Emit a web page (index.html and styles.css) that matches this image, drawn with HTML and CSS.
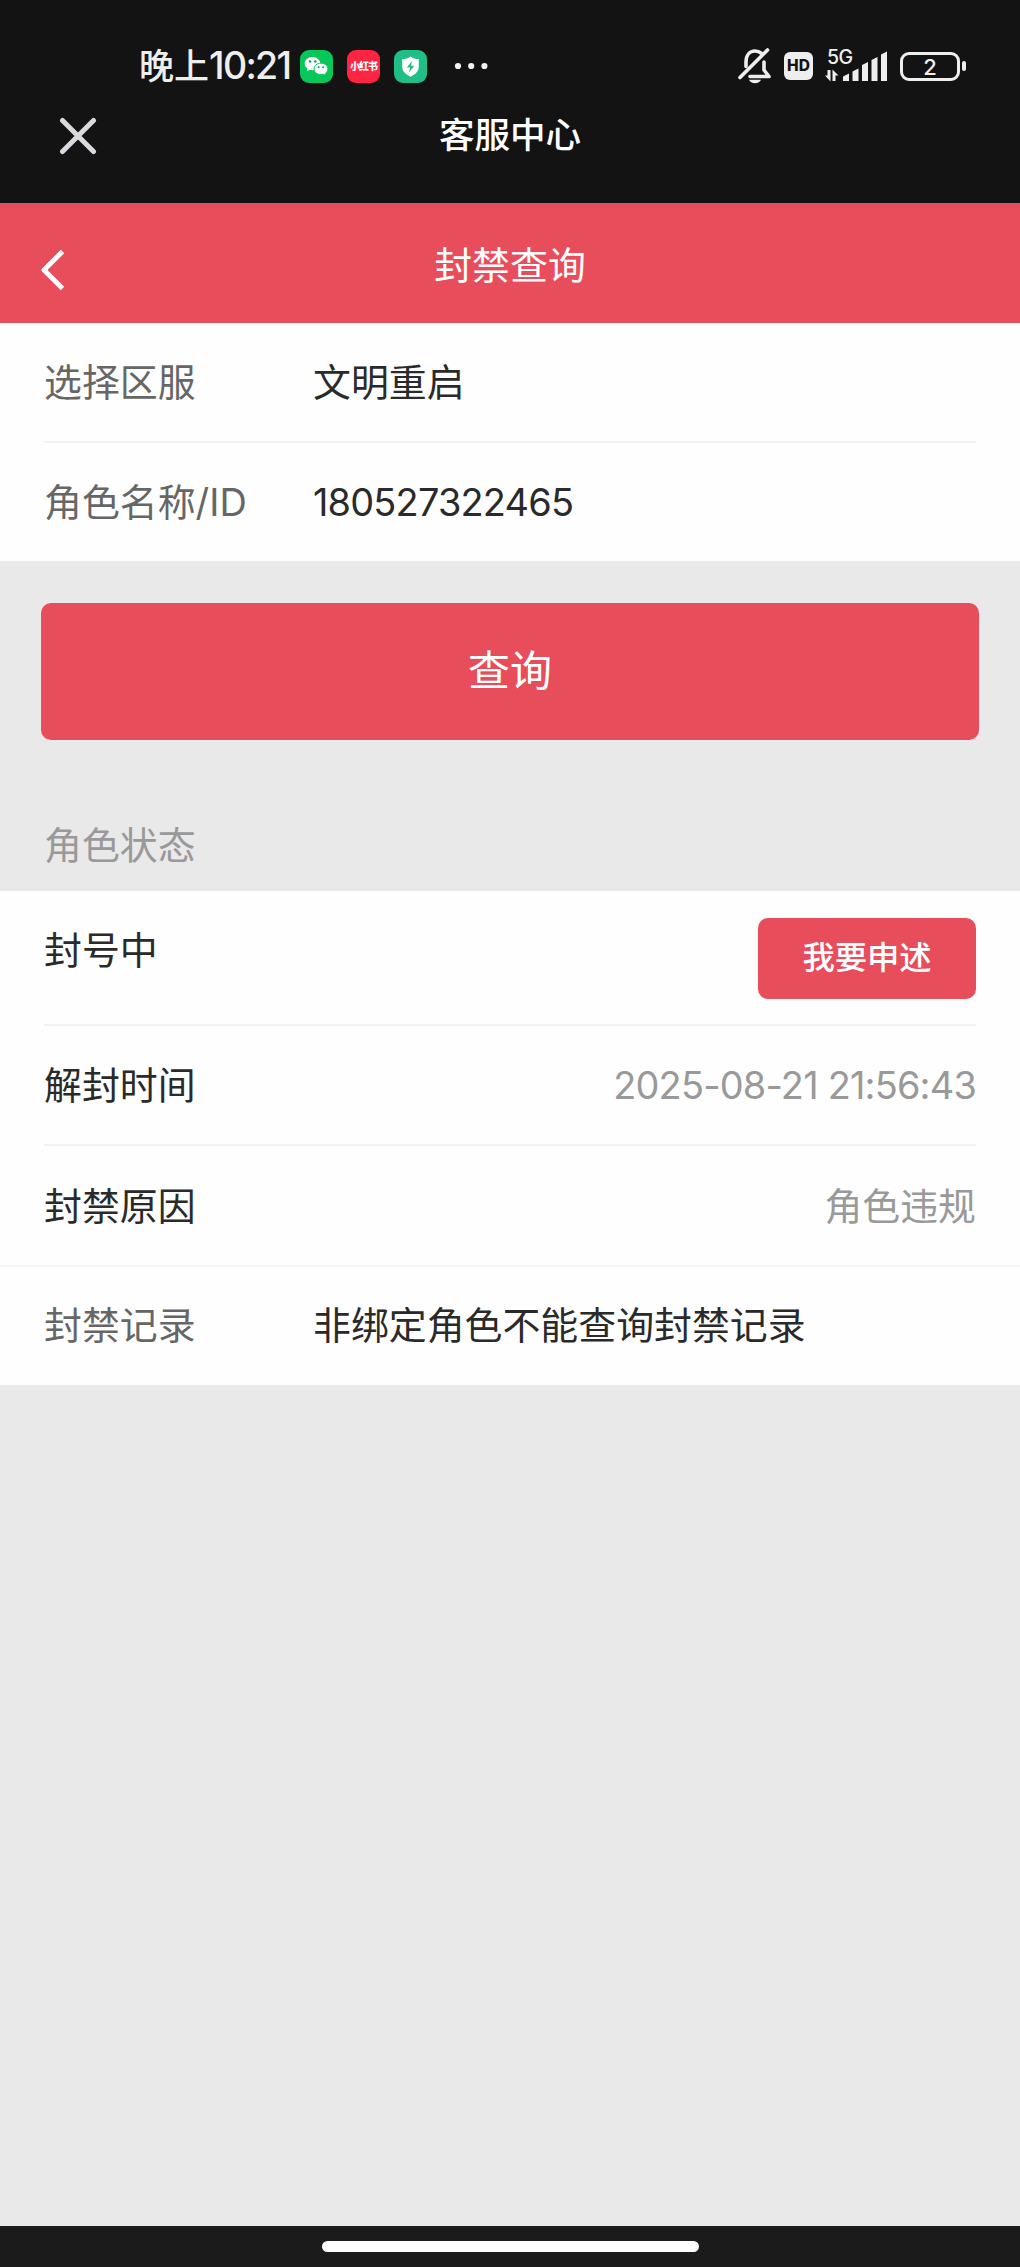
FILE: index.html
```
<!DOCTYPE html>
<html lang="zh-CN">
  <head>
    <meta charset="UTF-8" />
    <meta name="viewport" content="width=device-width, initial-scale=1" />
    <title>封禁查询</title>
    <link rel="stylesheet" href="styles.css">
  </head>
  <body>
    <div class="status-bar">
      <span class="time">晚上<span class="clock">10:21</span></span>
      <div class="app-icons">
        <svg width="33" height="33" viewBox="0 0 33 33">
          <rect width="33" height="33" rx="9" fill="#07c75b" />
          <path d="M12.500 7C8 7 4.700 10 4.700 13.600c0 2.100 1.100 3.900 2.800 5.100l-.6 2.600 2.900-1.500c.9.300 1.800.4 2.700.4 4.300 0 7.800-3 7.800-6.600S16.800 7 12.500 7z" fill="#fff" />
          <path d="M21 13.200c-4 0-7 2.500-7 5.700s3 5.700 7 5.700c.8 0 1.600-.1 2.300-.3l2.600 1.300-.6-2.200c1.600-1 2.600-2.700 2.600-4.500 0-3.200-3-5.700-6.900-5.700z" fill="#fff" stroke="#07c75b" stroke-width="1" />
          <g fill="#07a04b">
            <circle cx="10" cy="11.500" r="1.200" />
            <circle cx="15.300" cy="11.500" r="1.200" />
            <circle cx="18.700" cy="17.300" r="1" />
            <circle cx="23.200" cy="17.300" r="1" />
          </g>
        </svg>
        <span class="red-app">小红书</span>
        <svg width="33" height="33" viewBox="0 0 33 33">
          <rect width="33" height="33" rx="9" fill="#1fbf86" />
          <path d="M16.500 6.500c2.500 1.800 5 2.500 8.300 2.700v7.300c0 4.700-3.300 7.900-8.300 10.200-5-2.300-8.300-5.500-8.300-10.200V9.200c3.300-.2 5.800-.9 8.300-2.700z" fill="#fff" />
          <path d="M18 11l-5.200 6.400h3.300L15 22.500l5.300-6.700H17z" fill="#1fbf86" />
        </svg>
      </div>
      <svg class="more" width="34" height="8" viewBox="0 0 34 8" fill="#f2f2f2">
        <circle cx="4" cy="4" r="3.100" />
        <circle cx="17.200" cy="4" r="3.100" />
        <circle cx="30.400" cy="4" r="3.100" />
      </svg>
      <div class="system-icons">
        <svg class="bell" width="34" height="36" viewBox="0 0 34 36" fill="none" stroke="#eee" stroke-width="3.600" stroke-linecap="round" stroke-linejoin="round">
          <path d="M8 18.500V14C8 7.500 11.500 3 17 3c2.500 0 4.600.8 6.200 2.200" />
          <path d="M26 14v8l5 6.500H12" />
          <path d="M29.500 2L2 29.500" />
          <path d="M11 31.800h12c-1 2.300-3 3.500-6 3.500s-5-1.200-6-3.500z" fill="#eee" stroke="none" />
        </svg>
        <span class="hd">HD</span>
        <div class="signal">
          <span class="network">5G</span>
          <svg width="64" height="32" viewBox="0 0 64 32" fill="#eee">
            <path d="M5.500 20v11.500L0 25.500h2.500V20zM7.500 31V19.500l6 6h-3V31z" />
            <path d="M18 26.500l6-3V31h-6zM27.500 21.500l6-3V31h-6zM37 15l6-3V31h-6zM46.500 10l6-3V31h-6zM56 4.500l6-3V31h-6z" />
          </svg>
        </div>
        <div class="battery">2</div>
      </div>
    </div>

    <div class="app-bar">
      <svg class="close" width="38" height="38" viewBox="0 0 38 38" stroke="#d9d9e0" stroke-width="5" stroke-linecap="round">
        <path d="M3.500 3.500l31 31M34.500 3.500l-31 31" />
      </svg>
      <span class="app-title">客服中心</span>
    </div>

    <div class="page-bar">
      <svg class="back" width="24" height="42" viewBox="0 0 24 42" fill="none" stroke="#fff" stroke-width="4.800" stroke-linejoin="round">
        <path d="M22.500 2.500L4 21l18.500 18.500" />
      </svg>
      <span class="page-title">封禁查询</span>
    </div>

    <div class="cells role">
      <div class="cell">
        <span class="label">选择区服</span>
        <span class="value">文明重启</span>
      </div>
      <div class="cell">
        <span class="label">角色名称/ID</span>
        <span class="value role-id">180527322465</span>
      </div>
    </div>

    <button class="query">查询</button>

    <div class="section-title">角色状态</div>

    <div class="cells status">
      <div class="cell banned">
        <span class="name">封号中</span>
        <button class="appeal">我要申述</button>
      </div>
      <div class="cell">
        <span class="name">解封时间</span>
        <span class="info date">2025-08-21 21:56:43</span>
      </div>
      <div class="cell">
        <span class="name">封禁原因</span>
        <span class="info">角色违规</span>
      </div>
    </div>
    <div class="cells record">
      <div class="cell">
        <span class="label">封禁记录</span>
        <span class="value">非绑定角色不能查询封禁记录</span>
      </div>
    </div>

    <div class="home-bar"><div class="home-line"></div></div>
  </body>
</html>
```
FILE: styles.css
```
* {
  box-sizing: border-box;
}
body {
  margin: 0;
  height: 2267px;
  display: flex;
  flex-direction: column;
  background: #e9e9e9;
  color: #2a2a2a;
  font-family: Inter, "Noto Sans CJK SC", sans-serif;
  font-size: 37.9px;
  line-height: 56px;
}
button {
  border: none;
  padding: 0;
  background: #e84d5b;
  color: #fff;
  font-family: inherit;
}
svg {
  display: block;
  flex-shrink: 0;
}
.status-bar {
  height: 100px;
  padding: 32px 54px 0 139px;
  display: flex;
  align-items: center;
  background: #131313;
  color: #eee;
}
.time {
  width: 161px;
  font-size: 35px;
  font-weight: 500;
  white-space: nowrap;
}
.clock {
  font-size: 37.5px;
  letter-spacing: -1.7px;
}
.app-icons {
  display: flex;
  gap: 14px;
}
.red-app {
  width: 33px;
  height: 33px;
  border-radius: 9px;
  background: #ff2442;
  color: #fff;
  font-size: 10px;
  font-weight: 900;
  line-height: 33px;
  text-align: center;
  letter-spacing: -1px;
}
.more {
  margin-left: 27px;
}
.system-icons {
  margin-left: auto;
  display: flex;
  align-items: center;
}
.hd {
  width: 29px;
  height: 28px;
  margin: 0 12px;
  border-radius: 6px;
  background: #eee;
  color: #131313;
  font-size: 15.5px;
  font-weight: 800;
  line-height: 28px;
  text-align: center;
}
.signal {
  position: relative;
}
.network {
  position: absolute;
  top: -3px;
  left: 2px;
  font-size: 19.5px;
  font-weight: 500;
  line-height: 20px;
  letter-spacing: -0.5px;
}
.battery {
  width: 60px;
  height: 29px;
  margin: 0 6px 0 11px;
  position: relative;
  border: 3px solid #eee;
  border-radius: 9px;
  font-size: 22px;
  font-weight: 500;
  line-height: 24px;
  text-align: center;
}
.battery::after {
  content: "";
  position: absolute;
  top: 6px;
  right: -9px;
  width: 4px;
  height: 10px;
  border-radius: 2px;
  background: #eee;
}
.app-bar,
.page-bar {
  display: grid;
  grid-template-columns: 120px 1fr 120px;
  align-items: center;
  color: #fff;
  text-align: center;
}
.app-bar {
  height: 103px;
  padding-bottom: 32px;
  background: #131313;
}
.close {
  margin-left: 59px;
}
.app-title {
  padding-top: 1px;
  font-size: 35.5px;
  font-weight: 500;
}
.page-bar {
  height: 120px;
  background: #e84d5b;
}
.back {
  margin: 14px 0 0 40px;
}
.page-title {
  padding-top: 4px;
}
.cells {
  padding: 0 44px;
  background: #fefefe;
}
.cell {
  height: 120px;
  display: flex;
  align-items: center;
  border-bottom: 2px solid #f2f2f2;
}
.cell:last-child {
  border-bottom: none;
}
.role .cell:last-child {
  height: 118px;
}
.label {
  width: 269px;
  color: #666;
}
.name {
  flex: 1;
}
.info {
  color: #999;
}
.role-id {
  letter-spacing: -0.8px;
}
.date {
  letter-spacing: -0.8px;
}
.query {
  height: 137px;
  margin: 42px 41px 0;
  padding-bottom: 9px;
  border-radius: 10px;
  font-size: 42px;
}
.section-title {
  height: 151px;
  padding: 77px 44px 0;
  color: #999;
}
.banned {
  height: 135px;
  padding-top: 27px;
  align-items: flex-start;
}
.banned .name {
  padding-top: 4px;
}
.appeal {
  width: 218px;
  height: 81px;
  padding-bottom: 8px;
  border-radius: 10px;
  font-size: 32.3px;
  font-weight: 500;
}
.status .cell:last-child {
  height: 119px;
}
.record {
  border-top: 2px solid #f4f4f4;
}
.record .cell {
  height: 118px;
  padding-bottom: 2px;
}
.home-bar {
  height: 41px;
  margin-top: auto;
  padding-top: 15px;
  background: #1b1b1b;
}
.home-line {
  width: 377px;
  height: 11px;
  margin: 0 auto;
  border-radius: 6px;
  background: #fff;
}
```
